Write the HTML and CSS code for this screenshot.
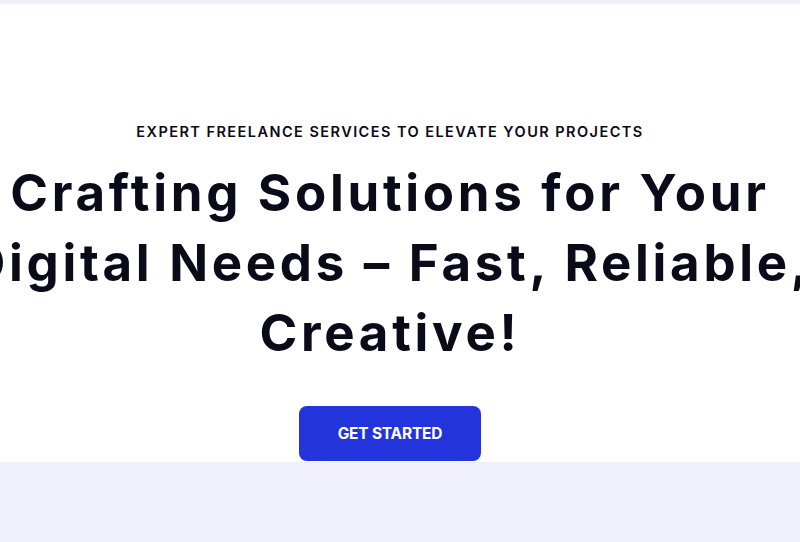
FILE: index.html
```html
<!DOCTYPE html>
<html lang="en">

<head>
    <meta charset="UTF-8">
    <meta name="viewport" content="width=device-width, initial-scale=1.0">
    <title>Freelance Services</title>
    <link rel="stylesheet" href="styles.css">
</head>

<body>
    <div class="topBand"></div>
    <section class="hero">
        <div class="heroInner">
            <p class="eyebrow">Expert freelance services to elevate your projects</p>
            <h1 class="title">
                <span>Crafting Solutions for Your</span>
                <span>Digital Needs – Fast, Reliable,</span>
                <span>Creative!</span>
            </h1>
            <a class="btn" href="#">Get Started</a>
        </div>
    </section>
    <section class="next"></section>
</body>

</html>
```

FILE: styles.css
```css
* {
    padding: 0px;
    margin: 0px;
    box-sizing: border-box;
}

body {
    font-family: Inter, "Noto Sans", "Liberation Sans", sans-serif;
    color: #0a0a18;
    background-color: #fff;
    overflow: hidden;
}

.topBand {
    height: 4px;
    background-color: #eff0fc;
}

.hero {
    background-color: #fff;
    padding-top: 118px;
}

.hero .heroInner {
    display: flex;
    flex-direction: column;
    align-items: center;
    padding-right: 20px;
}

.hero .eyebrow {
    font-size: 14.5px;
    line-height: 20px;
    font-weight: 600;
    text-transform: uppercase;
    letter-spacing: 1.45px;
    white-space: nowrap;
}

/* big headline runs wider than the window on purpose */
.hero .title {
    margin-top: 16px;
    display: flex;
    flex-direction: column;
    align-items: center;
    font-size: 51px;
    line-height: 70px;
    font-weight: 700;
    letter-spacing: 3.7px;
}

.hero .title span {
    white-space: nowrap;
}

.hero .btn {
    margin-top: 38px;
    display: flex;
    align-items: center;
    justify-content: center;
    width: 182px;
    height: 55px;
    border-radius: 8px;
    background-color: #2334dd;
    color: #fff;
    font-size: 15.5px;
    font-weight: 700;
    letter-spacing: -0.2px;
    text-transform: uppercase;
    text-decoration: none;
}

.next {
    margin-top: 1px;
    height: 100px;
    background-color: #eff0fc;
}
```
